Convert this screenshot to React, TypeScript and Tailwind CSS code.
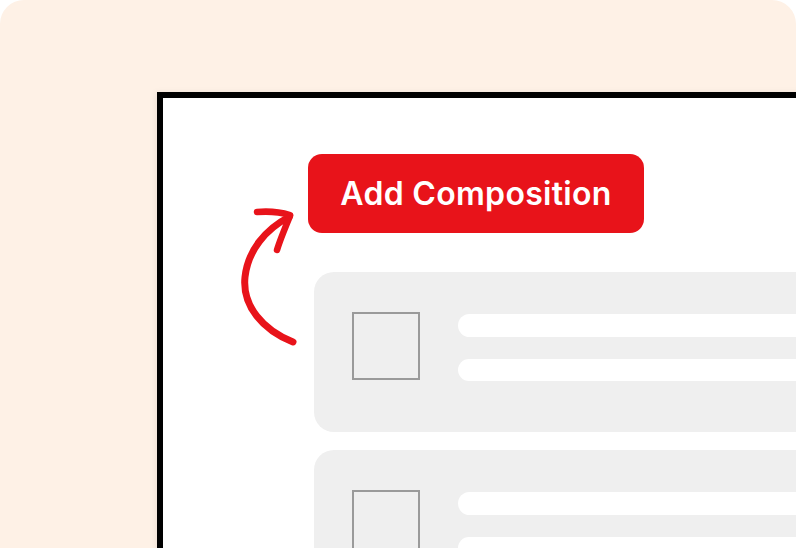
export default function App() {
    const cards = [0, 1];

    return (
        <div className="w-[796px] h-[548px] bg-white overflow-hidden" style={{ fontFamily: 'Inter, "Liberation Sans", sans-serif' }}>
            <div className="relative h-[600px] rounded-t-[24px] bg-[#fef1e6] pl-[157px] pt-[92px]">
                {/* Mock window */}
                <div className="w-[760px] h-[520px] border-[6px] border-black bg-white shadow-[-2px_0_6px_rgba(0,0,0,0.06)]">
                    <div className="pl-[145px] pt-[56px]">
                        <div className="w-[336px] h-[79px] rounded-[14px] bg-[#e8131a] flex items-center justify-center text-white text-[32px] font-semibold tracking-[0.3px]">
                            Add Composition
                        </div>
                    </div>

                    <div className="ml-[151px] mt-[39px] flex flex-col gap-[18px]">
                        {cards.map((c) => (
                            <div key={c} className="h-[160px] rounded-l-[20px] bg-[#efefef] pl-[38px] pt-[40px] flex gap-[38px]">
                                <div className="w-[68px] h-[68px] border-2 border-[#9a9a9a]" />
                                <div className="flex-1 flex flex-col gap-[22px] pt-[2px]">
                                    <div className="h-[23px] rounded-l-full bg-white" />
                                    <div className="h-[22px] rounded-l-full bg-white" />
                                </div>
                            </div>
                        ))}
                    </div>
                </div>

                {/* Hand-drawn arrow pointing at the button */}
                <svg className="absolute left-0 top-0 pointer-events-none" width="796" height="548" viewBox="0 0 796 548">
                    <g fill="none" stroke="#e8131a" strokeLinecap="round" strokeLinejoin="round">
                        <path d="M293 342 C 263 330, 242 306, 245 277 C 248 250, 266 229, 289 217" strokeWidth="7" />
                        <path d="M257 212 C 269 211, 280 212, 290 215" strokeWidth="6.5" />
                        <path d="M290 216 C 285 228, 280 240, 277 250" strokeWidth="6.5" />
                    </g>
                </svg>
            </div>
        </div>
    );
}
